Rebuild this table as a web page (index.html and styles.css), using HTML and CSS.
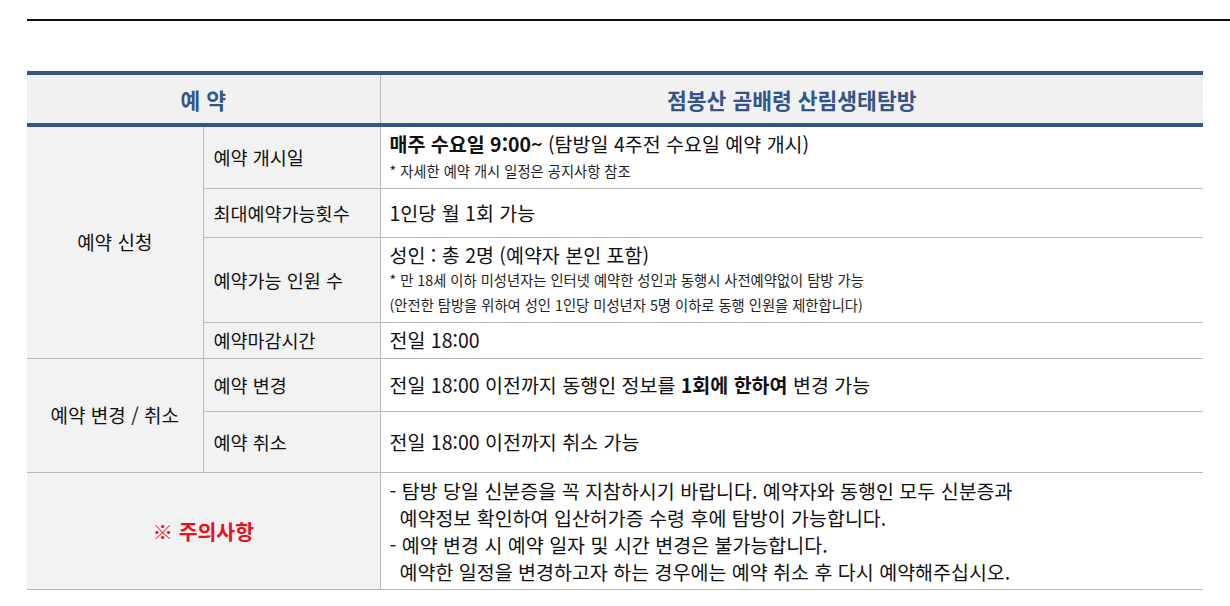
FILE: index.html
```html
<!DOCTYPE html>
<html lang="ko">
<head>
<meta charset="utf-8">
<title>예약 안내</title>
<link rel="stylesheet" href="styles.css">
</head>
<body>
<div class="page">
  <div class="rule"></div>
  <table class="info">
    <colgroup>
      <col class="c1">
      <col class="c2">
      <col class="c3">
    </colgroup>
    <thead>
      <tr class="head">
        <th colspan="2">예 약</th>
        <th>점봉산 곰배령 산림생태탐방</th>
      </tr>
    </thead>
    <tbody>
      <tr class="r1">
        <td class="group" rowspan="4">예약 신청</td>
        <td class="label">예약 개시일</td>
        <td class="val">
          <div class="main"><b>매주 수요일 9:00~</b> (탐방일 4주전 수요일 예약 개시)</div>
          <div class="note">* 자세한 예약 개시 일정은 공지사항 참조</div>
        </td>
      </tr>
      <tr class="r2">
        <td class="label">최대예약가능횟수</td>
        <td class="val"><div class="main">1인당 월 1회 가능</div></td>
      </tr>
      <tr class="r3">
        <td class="label">예약가능 인원 수</td>
        <td class="val">
          <div class="main">성인 : 총 2명 (예약자 본인 포함)</div>
          <div class="note">* 만 18세 이하 미성년자는 인터넷 예약한 성인과 동행시 사전예약없이 탐방 가능</div>
          <div class="note">(안전한 탐방을 위하여 성인 1인당 미성년자 5명 이하로 동행 인원을 제한합니다)</div>
        </td>
      </tr>
      <tr class="r4">
        <td class="label">예약마감시간</td>
        <td class="val"><div class="main">전일 18:00</div></td>
      </tr>
      <tr class="r5">
        <td class="group" rowspan="2">예약 변경 / 취소</td>
        <td class="label">예약 변경</td>
        <td class="val"><div class="main">전일 18:00 이전까지 동행인 정보를 <b>1회에 한하여</b> 변경 가능</div></td>
      </tr>
      <tr class="r6">
        <td class="label">예약 취소</td>
        <td class="val"><div class="main">전일 18:00 이전까지 취소 가능</div></td>
      </tr>
      <tr class="r7">
        <td class="warn" colspan="2">※ 주의사항</td>
        <td class="val">
          <div class="line">- 탐방 당일 신분증을 꼭 지참하시기 바랍니다. 예약자와 동행인 모두 신분증과</div>
          <div class="line indent">예약정보 확인하여 입산허가증 수령 후에 탐방이 가능합니다.</div>
          <div class="line">- 예약 변경 시 예약 일자 및 시간 변경은 불가능합니다.</div>
          <div class="line indent">예약한 일정을 변경하고자 하는 경우에는 예약 취소 후 다시 예약해주십시오.</div>
        </td>
      </tr>
    </tbody>
  </table>
</div>
</body>
</html>
```
FILE: styles.css
```css
html, body {
  margin: 0;
  padding: 0;
  background: #ffffff;
}

body {
  font-family: "Noto Sans CJK KR", "Noto Sans", sans-serif;
  color: #111111;
}

.page {
  padding: 19px 0 0 27px;
}

.rule {
  height: 2px;
  background: #111111;
  margin-bottom: 50px;
}

.info {
  width: 1176px;
  border-collapse: collapse;
  table-layout: fixed;
  border-top: 4px solid #34558b;
}

.c1 { width: 176px; }
.c2 { width: 177px; }
.c3 { width: 823px; }

.head th {
  height: 48px;
  padding: 0;
  background: #f1f1f1;
  color: #34558b;
  font-size: 21.5px;
  font-weight: 700;
  text-align: center;
  border-bottom: 4px solid #34558b;
}

.head th + th {
  border-left: 1px solid #b9b9b9;
}

.info td {
  padding: 0;
  border-bottom: 1px solid #b9b9b9;
  vertical-align: middle;
  font-size: 18.5px;
  line-height: 24px;
}

.group {
  background: #f2f2f2;
  text-align: center;
  border-right: 1px solid #b9b9b9;
  font-size: 19px !important;
}

.label {
  background: #f2f2f2;
  padding-left: 10px !important;
  border-right: 1px solid #b9b9b9;
}

.val {
  padding-left: 9px !important;
  background: #ffffff;
  font-size: 19.5px !important;
}

.warn {
  background: #f2f2f2;
  text-align: center;
  color: #e8101a;
  font-weight: 700;
  font-size: 20.5px !important;
  border-right: 1px solid #b9b9b9;
}

.main b {
  font-weight: 700;
}

.note {
  font-size: 14.3px;
  line-height: 25px;
  color: #222222;
}

.r1 .main {
  margin-bottom: 2px;
}

.line {
  line-height: 27px;
  white-space: pre;
}

.indent {
  padding-left: 10px;
}

.r1 { height: 63px; }
.r2 { height: 49px; }
.r3 { height: 85px; }
.r4 { height: 36px; }
.r5 { height: 53px; }
.r6 { height: 61px; }
.r7 { height: 117px; }
```
